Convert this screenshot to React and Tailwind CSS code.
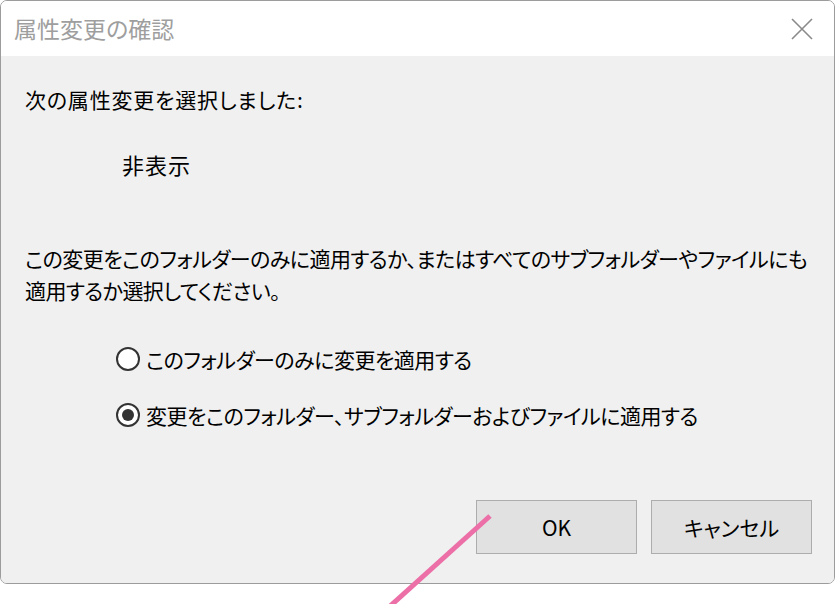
const font = { fontFamily: '"Noto Sans CJK JP", "Noto Sans", sans-serif' };

function Radio({ checked, label }) {
  return (
    <div className="flex items-center h-[32px] pl-[115px]">
      <span className="w-[24px] h-[24px] rounded-full border-2 border-[#333333] bg-white flex items-center justify-center shrink-0">
        {checked && <span className="w-[12px] h-[12px] rounded-full bg-[#333333]" />}
      </span>
      <span className="ml-[6px] whitespace-nowrap tracking-[-0.5px]">{label}</span>
    </div>
  );
}

export default function App() {
  return (
    <div
      className="relative w-[835px] h-[604px] bg-white overflow-hidden text-black [font-feature-settings:'palt']"
      style={font}
    >
      <div className="w-[835px] h-[584px] border border-[#9c9c9c] rounded-[7px] overflow-hidden flex flex-col">
        {/* title bar */}
        <div className="h-[55px] bg-white flex items-center justify-between shrink-0">
          <span className="pl-[13px] text-[23px] text-[#9e9e9e] leading-none">属性変更の確認</span>
          <svg className="mr-[21px]" width="22" height="22" viewBox="0 0 22 22">
            <path d="M1 1 L21 21 M21 1 L1 21" stroke="#8a8a8a" strokeWidth="1.6" fill="none" />
          </svg>
        </div>

        {/* body */}
        <div className="flex-1 bg-[#f0f0f0] flex flex-col text-[21px] leading-[32px] pt-[27px]">
          <p className="pl-[24px] whitespace-nowrap tracking-[0.8px]">次の属性変更を選択しました:</p>
          <p className="pl-[121px] mt-[33px] text-[22px] tracking-[1px]">非表示</p>

          <div className="pl-[24px] mt-[62px] whitespace-nowrap tracking-[-0.55px]">
            <p>この変更をこのフォルダーのみに適用するか、またはすべてのサブフォルダーやファイルにも</p>
            <p>適用するか選択してください。</p>
          </div>

          <div className="mt-[37px] flex flex-col gap-[24px]">
            <Radio label="このフォルダーのみに変更を適用する" />
            <Radio checked label="変更をこのフォルダー、サブフォルダーおよびファイルに適用する" />
          </div>

          <div className="mt-[69px] flex justify-end gap-[14px] pr-[22px]">
            <button className="w-[161px] h-[54px] bg-[#e1e1e1] border border-[#adadad] text-[21px]">OK</button>
            <button className="w-[161px] h-[54px] bg-[#e1e1e1] border border-[#adadad] text-[21px]">キャンセル</button>
          </div>
        </div>
      </div>

      {/* annotation line */}
      <svg className="absolute left-0 top-0 pointer-events-none" width="835" height="604">
        <line x1="490" y1="516" x2="388" y2="608" stroke="#ec6fa7" strokeWidth="5" />
      </svg>
    </div>
  );
}
